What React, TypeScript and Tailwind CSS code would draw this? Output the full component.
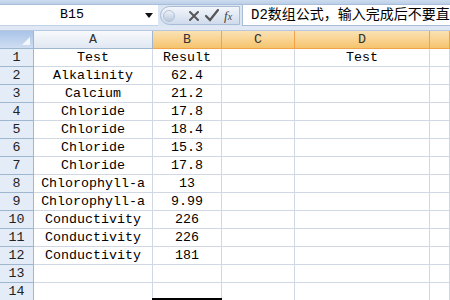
import React from "react";

const rows: [string, string, string][] = [
  ["Test", "Result", "Test"],
  ["Alkalinity", "62.4", ""],
  ["Calcium", "21.2", ""],
  ["Chloride", "17.8", ""],
  ["Chloride", "18.4", ""],
  ["Chloride", "15.3", ""],
  ["Chloride", "17.8", ""],
  ["Chlorophyll-a", "13", ""],
  ["Chlorophyll-a", "9.99", ""],
  ["Conductivity", "226", ""],
  ["Conductivity", "226", ""],
  ["Conductivity", "181", ""],
  ["", "", ""],
  ["", "", ""],
];

const rowHead =
  "flex items-center justify-center border-r border-b border-[#9eb6ce] bg-[#e4ecf7] text-[#222]";
const cell = "flex items-center justify-center border-r border-b border-[#d0d7e5] text-black whitespace-nowrap";
const colHeadOrange =
  "flex items-center justify-center border-r border-b border-[#f2a34a] bg-gradient-to-b from-[#fbe2b4] to-[#f5c46c] text-[#333]";

export default function App() {
  return (
    <div className="w-[450px] h-[300px] overflow-hidden bg-white flex flex-col font-['Liberation_Mono','Noto_Sans_CJK_SC',monospace] text-[13.3px] leading-none">
      {/* ribbon edge */}
      <div className="shrink-0 h-[5px] bg-gradient-to-b from-[#cddcef] to-[#bccfe7] border-b border-[#a9bedb]" />
      {/* formula bar */}
      <div className="shrink-0 h-[21px] flex bg-[#dbe6f3]">
        <div className="w-[158px] bg-white border-b border-[#c3d1e4] flex items-center">
          <div className="w-[144px] text-center text-black">B15</div>
          <svg width="8" height="5" viewBox="0 0 8 5" className="ml-[1px]">
            <path d="M0 0 L8 0 L4 5 Z" fill="#111" />
          </svg>
        </div>
        <div className="w-[80px] ml-[2px] mt-[1px] h-[19px] rounded-l-full border border-[#a9bcd6] bg-gradient-to-b from-[#f3f6fb] to-[#cfdbec] flex items-center">
          <div className="w-[12px] h-[12px] ml-[2px] rounded-full bg-gradient-to-b from-[#eef2f8] to-[#b9c8dc] border border-[#b3c2d8]" />
          <svg width="12" height="12" viewBox="0 0 12 12" className="ml-[13px]">
            <path d="M2 2 L10 10 M10 2 L2 10" stroke="#555" strokeWidth="2" strokeLinecap="round" />
          </svg>
          <svg width="14" height="13" viewBox="0 0 14 13" className="ml-[5px]">
            <path d="M1 7 L5 11 L13 1" stroke="#555" strokeWidth="2.2" fill="none" strokeLinecap="round" />
          </svg>
          <span className="ml-[5px] font-['Liberation_Serif',serif] italic text-[13px] text-[#444]">
            f<span className="text-[10px]">x</span>
          </span>
        </div>
        <div className="flex-1 ml-[2px] bg-white border-l border-b border-[#a9bcd6] flex items-center pl-[8px] text-[14px] text-black whitespace-nowrap overflow-hidden">
          D2数组公式，输入完成后不要直接回车
        </div>
      </div>
      <div className="shrink-0 h-[5px] bg-[#dfe8f4] border-b border-[#b6c7de]" />
      {/* grid */}
      <div className="shrink-0 grid grid-cols-[34px_119px_69px_73px_135px_1fr] auto-rows-[18px]">
        <div className="relative border-r border-b border-[#9eb6ce] bg-gradient-to-b from-[#a9c4e8] to-[#cfdef2]">
          <svg width="8" height="8" viewBox="0 0 8 8" className="absolute right-[3px] bottom-[3px]">
            <path d="M8 0 L8 8 L0 8 Z" fill="#f4f8fd" />
          </svg>
        </div>
        <div className="flex items-center justify-center border-r border-b border-[#9eb6ce] bg-gradient-to-b from-[#f7f9fc] to-[#e1e8f2] text-[#333]">A</div>
        <div className={colHeadOrange}>B</div>
        <div className={colHeadOrange}>C</div>
        <div className={colHeadOrange}>D</div>
        <div className={colHeadOrange}></div>
        {rows.map((r, i) => (
          <React.Fragment key={i}>
            <div className={rowHead}>{i + 1}</div>
            <div className={cell}>{r[0]}</div>
            <div className={cell}>{r[1]}</div>
            <div className={cell}></div>
            <div className={cell}>{r[2]}</div>
            <div className={cell}></div>
          </React.Fragment>
        ))}
        <div className={rowHead}></div>
        <div className={cell}></div>
        <div className={`${cell} relative`}>
          <div className="absolute left-[-1px] right-[-1px] top-[-3px] h-[2px] bg-black" />
        </div>
        <div className={cell}></div>
        <div className={cell}></div>
        <div className={cell}></div>
      </div>
    </div>
  );
}
